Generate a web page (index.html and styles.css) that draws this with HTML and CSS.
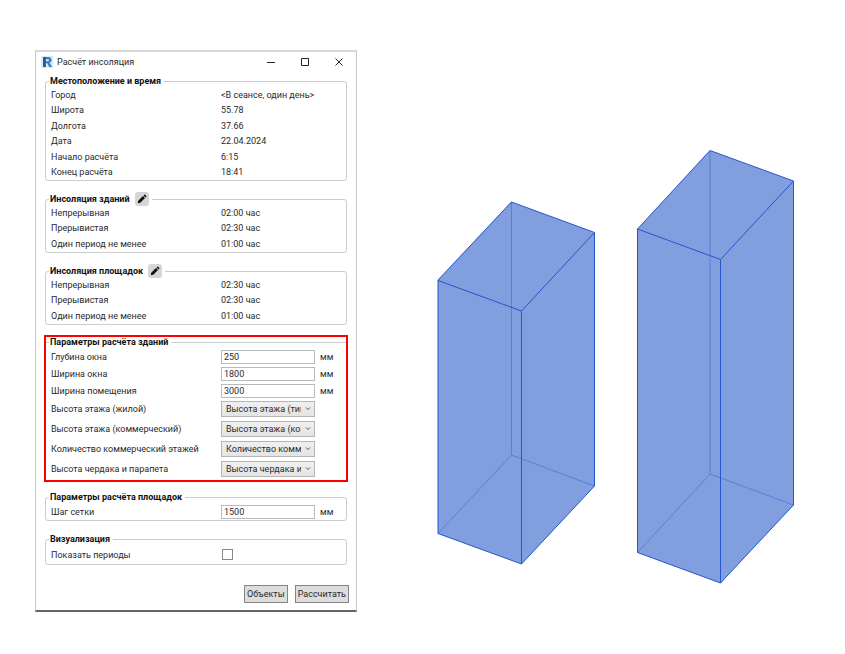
FILE: index.html
```html
<!DOCTYPE html>
<html lang="ru">
<head>
<meta charset="utf-8">
<title>Расчёт инсоляция</title>
<link rel="stylesheet" href="styles.css">
</head>
<body>
<main class="workspace">
  <form class="dialog">
    <header class="titlebar">
      <svg class="logo" viewBox="0 0 12 12" aria-hidden="true">
        <rect width="12" height="12" fill="#dbe9f6"/>
        <path fill="#3a7fc4" fill-rule="evenodd" d="M2 1h5c2.200 0 3.600 1.100 3.600 3 0 1.400-.8 2.300-2 2.700L11 11H8.200L6.200 7.200H4.800V11H2zM4.800 3.200v2H7c1.200 0 1.200-2 0-2z"/>
        <path fill="#1f5d9f" d="M2 1h2.800v10H2z"/>
      </svg>
      <h1 class="title">Расчёт инсоляция</h1>
      <button type="button" class="winbtn" aria-label="Свернуть"><svg viewBox="0 0 10 10"><path d="M1 5.500h8"/></svg></button>
      <button type="button" class="winbtn" aria-label="Развернуть"><svg viewBox="0 0 10 10"><path d="M1.500 1.500h7v7h-7z"/></svg></button>
      <button type="button" class="winbtn" aria-label="Закрыть"><svg viewBox="0 0 10 10"><path d="M1.500 1.500l7 7M8.500 1.500l-7 7"/></svg></button>
    </header>

    <fieldset class="group">
      <legend>Местоположение и время</legend>
      <dl class="rows rows-six">
        <div class="row"><dt>Город</dt><dd>&lt;В сеансе, один день&gt;</dd></div>
        <div class="row"><dt>Широта</dt><dd>55.78</dd></div>
        <div class="row"><dt>Долгота</dt><dd>37.66</dd></div>
        <div class="row"><dt>Дата</dt><dd>22.04.2024</dd></div>
        <div class="row"><dt>Начало расчёта</dt><dd>6:15</dd></div>
        <div class="row"><dt>Конец расчёта</dt><dd>18:41</dd></div>
      </dl>
    </fieldset>

    <fieldset class="group spaced">
      <legend>Инсоляция зданий <button type="button" class="edit" aria-label="Изменить"><svg viewBox="0 0 14 14"><path d="M2 12l.6-3 5.500-5.500 2.400 2.400-5.500 5.500zM8.800 2.800l.8-.8c.3-.3.700-.3 1 0l1.400 1.400c.3.3.3.700 0 1l-.8.8z"/></svg></button></legend>
      <dl class="rows rows-three">
        <div class="row"><dt>Непрерывная</dt><dd>02:00 <span class="hours">час</span></dd></div>
        <div class="row"><dt>Прерывистая</dt><dd>02:30 <span class="hours">час</span></dd></div>
        <div class="row"><dt>Один период не менее</dt><dd>01:00 <span class="hours">час</span></dd></div>
      </dl>
    </fieldset>

    <fieldset class="group spaced">
      <legend>Инсоляция площадок <button type="button" class="edit" aria-label="Изменить"><svg viewBox="0 0 14 14"><path d="M2 12l.6-3 5.500-5.500 2.400 2.400-5.500 5.500zM8.800 2.800l.8-.8c.3-.3.700-.3 1 0l1.400 1.400c.3.3.3.700 0 1l-.8.8z"/></svg></button></legend>
      <dl class="rows rows-three">
        <div class="row"><dt>Непрерывная</dt><dd>02:30 <span class="hours">час</span></dd></div>
        <div class="row"><dt>Прерывистая</dt><dd>02:30 <span class="hours">час</span></dd></div>
        <div class="row"><dt>Один период не менее</dt><dd>01:00 <span class="hours">час</span></dd></div>
      </dl>
    </fieldset>

    <fieldset class="group highlighted">
      <legend>Параметры расчёта зданий</legend>
      <div class="row field"><label for="depth">Глубина окна</label><input class="text" id="depth" type="text" value="250"><span class="unit">мм</span></div>
      <div class="row field"><label for="width">Ширина окна</label><input class="text" id="width" type="text" value="1800"><span class="unit">мм</span></div>
      <div class="row field"><label for="room">Ширина помещения</label><input class="text" id="room" type="text" value="3000"><span class="unit">мм</span></div>
      <div class="row choice"><label for="living">Высота этажа (жилой)</label><span class="combo"><select id="living"><option>Высота этажа (типовой)</option></select><svg class="arrow" viewBox="0 0 6 4"><path d="M1 .5l2 2 2-2"/></svg></span></div>
      <div class="row choice"><label for="office">Высота этажа (коммерческий)</label><span class="combo"><select id="office"><option>Высота этажа (коммерческий)</option></select><svg class="arrow" viewBox="0 0 6 4"><path d="M1 .5l2 2 2-2"/></svg></span></div>
      <div class="row choice"><label for="count">Количество коммерческий этажей</label><span class="combo"><select id="count"><option>Количество коммерческий этажей</option></select><svg class="arrow" viewBox="0 0 6 4"><path d="M1 .5l2 2 2-2"/></svg></span></div>
      <div class="row choice"><label for="attic">Высота чердака и парапета</label><span class="combo"><select id="attic"><option>Высота чердака и парапета</option></select><svg class="arrow" viewBox="0 0 6 4"><path d="M1 .5l2 2 2-2"/></svg></span></div>
    </fieldset>

    <fieldset class="group">
      <legend>Параметры расчёта площадок</legend>
      <div class="row field"><label for="step">Шаг сетки</label><input class="text" id="step" type="text" value="1500"><span class="unit">мм</span></div>
    </fieldset>

    <fieldset class="group spaced">
      <legend>Визуализация</legend>
      <div class="row check"><label for="periods">Показать периоды</label><input class="tick" id="periods" type="checkbox"></div>
    </fieldset>

    <footer class="actions">
      <button type="button" class="action">Объекты</button>
      <button type="button" class="action">Рассчитать</button>
    </footer>
  </form>

  <svg class="scene" viewBox="430 140 370 450" role="img" aria-label="Два здания">
    <g class="building">
      <path class="body" d="M511 202L594.500 232.500V486L521.500 564L438 533.500V280z"/>
      <path class="hidden-edge" d="M511.500 202V455L438 533.500M511.500 455L594.500 486"/>
      <path class="edge" d="M511.500 202L594.500 232.500V486L521.500 564L438 533.500V280zM438 280.500L521.500 311L594.500 232.500M521.500 311V564"/>
    </g>
    <g class="building">
      <path class="body" d="M710 150.500L793.500 181V505L720.500 583L637.500 552.500V229z"/>
      <path class="hidden-edge" d="M710 150.500V474L637.500 552.500M710 474L793.500 505"/>
      <path class="edge" d="M710 150.500L793.500 181V505L720.500 583L637.500 552.500V229zM637.500 229L720.500 259.500L793.500 181M720.500 259.500V583"/>
    </g>
  </svg>
</main>
</body>
</html>
```
FILE: styles.css
```css
* {
  box-sizing: border-box;
}

body {
  margin: 0;
  background: #fff;
  color: #2a2a2a;
  font: 9px/12px Roboto, "Noto Sans", sans-serif;
}

button,
input,
select {
  margin: 0;
  font: inherit;
  color: inherit;
}

.workspace {
  display: flex;
  align-items: flex-start;
  gap: 73px;
  padding: 50px 45px 40px 35px;
}

.dialog {
  flex: 0 0 322px;
  padding: 0 9px 7px;
  border: 1px solid #c9c9c9;
  border-top: 2px solid #d8d8d8;
  border-bottom: 2px solid #666;
}

.titlebar {
  display: flex;
  align-items: center;
  height: 20px;
  margin: 0 -4px 3px;
}

.logo {
  width: 12px;
  height: 12px;
  margin-right: 4px;
}

.title {
  flex: 1;
  margin: 0;
  font-size: 9px;
  font-weight: 400;
}

.winbtn {
  display: flex;
  align-items: center;
  justify-content: center;
  width: 34px;
  height: 20px;
  padding: 0;
  border: 0;
  background: none;
}

.winbtn:last-child {
  margin-right: -5px;
}

.winbtn svg {
  width: 10px;
  height: 10px;
  fill: none;
  stroke: #222;
}

.group {
  min-width: 0;
  margin: 0 0 10px;
  padding: 0 5px;
  border: 1px solid #ccc;
  border-radius: 3px;
}

.group.spaced {
  margin-top: 12px;
}

.group.highlighted {
  margin-top: 11px;
  outline: 2px solid #f00;
  outline-offset: -1px;
  border-radius: 0;
  padding-bottom: 1px;
}

legend {
  display: flex;
  align-items: center;
  gap: 5px;
  height: 12px;
  margin-left: -2px;
  padding: 0 3px 0 1px;
  color: #111;
  font-weight: 700;
}

.edit {
  display: flex;
  width: 14px;
  height: 14px;
  padding: 1px;
  border: 0;
  border-radius: 3px;
  background: #d6d6d6;
}

.edit svg {
  width: 12px;
  height: 12px;
  fill: #111;
}

.rows {
  display: grid;
  grid-auto-rows: 1fr;
  margin: 0;
}

.rows-six {
  min-height: 93px;
}

.rows-three {
  min-height: 47px;
}

.row {
  display: grid;
  grid-template-columns: 170px 94px 1fr;
  align-items: center;
}

.row dd {
  grid-column: 2 / -1;
  margin: 0;
}

.field {
  min-height: 17px;
}

.choice {
  min-height: 20px;
}

.check {
  min-height: 19px;
}

.text {
  width: 100%;
  height: 14px;
  padding: 0 2px;
  border: 1px solid #b8bac0;
  border-radius: 0;
  background: #fff;
}

.unit {
  margin-left: 5px;
}

.combo {
  position: relative;
  display: block;
}

.combo select {
  display: block;
  width: 100%;
  height: 16px;
  padding: 0 13px 0 4px;
  border: 1px solid #b5b5b5;
  border-radius: 0;
  background: linear-gradient(#f0f0f0, #e4e4e4);
  appearance: none;
}

.arrow {
  position: absolute;
  top: 6px;
  right: 4px;
  width: 6px;
  height: 4px;
  fill: none;
  stroke: #555;
  pointer-events: none;
}

.tick {
  width: 11px;
  height: 11px;
  margin-left: 1px;
  border: 1px solid #888;
  background: #fff;
  appearance: none;
}

.tick:checked {
  background: #2b5fc4;
}

.actions {
  display: flex;
  justify-content: flex-end;
  gap: 7px;
  margin: 20px -2px 0 0;
}

.action {
  height: 18px;
  padding: 0 2px;
  border: 1px solid #858585;
  background: #ddd;
}

.scene {
  flex: 0 1 370px;
  min-width: 0;
  margin-top: 90px;
}

.body {
  fill: #819edf;
}

.edge {
  fill: none;
  stroke: #2456cc;
}

.hidden-edge {
  fill: none;
  stroke: #5a7fd6;
}
```
